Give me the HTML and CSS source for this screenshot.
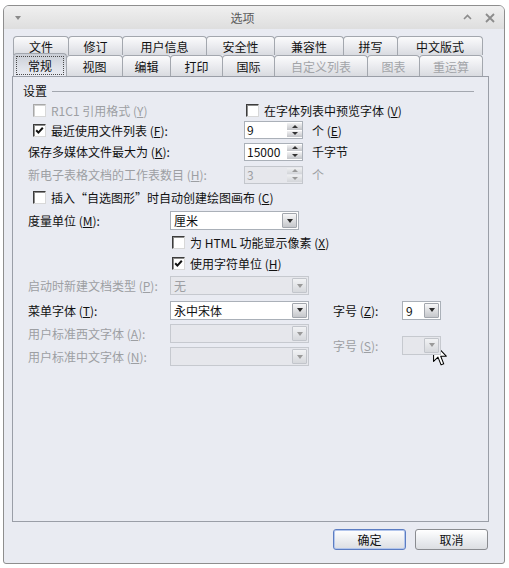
FILE: index.html
```html
<!DOCTYPE html>
<html lang="zh-CN">
<head>
<meta charset="utf-8">
<title>选项</title>
<link rel="stylesheet" href="styles.css">
</head>
<body>
<div class="win">
  <div class="titlebar">
    <span class="tb-menu"><span class="tri"></span></span>
    <span class="title">选项</span>
    <span class="tb-ctrl">
      <svg class="tb-up" width="9" height="6" viewBox="0 0 9 6"><polyline points="1,5 4.5,1.5 8,5" fill="none" stroke="#8c8c8c" stroke-width="1.6"/></svg>
      <svg class="tb-x" width="10" height="10" viewBox="0 0 10 10"><path d="M1,1 L9,9 M9,1 L1,9" stroke="#8c8c8c" stroke-width="1.8"/></svg>
    </span>
  </div>
  <div class="body">
    <div class="tabs">
      <div class="tabrow back">
        <div class="tab w56">文件</div>
        <div class="tab w55">修订</div>
        <div class="tab w85">用户信息</div>
        <div class="tab w69">安全性</div>
        <div class="tab w70">兼容性</div>
        <div class="tab w55">拼写</div>
        <div class="tab w86">中文版式</div>
      </div>
      <div class="tabrow front">
        <div class="tab sel w54"><span class="focus">常规</span></div>
        <div class="tab w57">视图</div>
        <div class="tab w49">编辑</div>
        <div class="tab w53">打印</div>
        <div class="tab w53">国际</div>
        <div class="tab dis w94">自定义列表</div>
        <div class="tab dis w53">图表</div>
        <div class="tab dis w64">重运算</div>
      </div>
    </div>
    <div class="panel">
      <div class="ghead"><span class="gtitle">设置</span><span class="gline"></span></div>
      <div class="rows">
        <div class="row h19">
          <div class="half"><span class="chk dis ind"><span class="box"></span><span>R1C1 引用格式 (<u>Y</u>)</span></span></div>
          <span class="chk"><span class="box"></span><span>在字体列表中预览字体 (<u>V</u>)</span></span>
        </div>
        <div class="row h20">
          <div class="lab216"><span class="chk ind"><span class="box"><svg width="9" height="9" viewBox="0 0 9 9"><polyline points="1.2,4.2 3.4,6.6 7.8,1.8" fill="none" stroke="#111" stroke-width="2"/></svg></span><span>最近使用文件列表 (<u>F</u>):</span></span></div>
          <div class="spin"><span class="val">9</span><span class="btns"><span class="up"></span><span class="dn"></span></span></div>
          <span class="unit">个 (<u>E</u>)</span>
        </div>
        <div class="row h23">
          <div class="lab216">保存多媒体文件最大为 (<u>K</u>):</div>
          <div class="spin"><span class="val">15000</span><span class="btns"><span class="up"></span><span class="dn"></span></span></div>
          <span class="unit">千字节</span>
        </div>
        <div class="row h23 dis">
          <div class="lab216">新电子表格文档的工作表数目 (<u>H</u>):</div>
          <div class="spin off"><span class="val">3</span><span class="btns"><span class="up"></span><span class="dn"></span></span></div>
          <span class="unit">个</span>
        </div>
        <div class="row h23">
          <span class="chk ind"><span class="box"></span><span>插入“自选图形”时自动创建绘图画布 (<u>C</u>)</span></span>
        </div>
        <div class="row h23">
          <div class="lab142">度量单位 (<u>M</u>):</div>
          <div class="combo w129"><span class="val">厘米</span><span class="dd"></span></div>
        </div>
        <div class="row h21">
          <span class="chk ind144"><span class="box"></span><span>为 HTML 功能显示像素 (<u>X</u>)</span></span>
        </div>
        <div class="row h20">
          <span class="chk ind144"><span class="box"><svg width="9" height="9" viewBox="0 0 9 9"><polyline points="1.2,4.2 3.4,6.6 7.8,1.8" fill="none" stroke="#111" stroke-width="2"/></svg></span><span>使用字符单位 (<u>H</u>)</span></span>
        </div>
        <div class="row h25 dis">
          <div class="lab142">启动时新建文档类型 (<u>P</u>):</div>
          <div class="combo off w139"><span class="val">无</span><span class="dd"></span></div>
        </div>
        <div class="row h24">
          <div class="lab142">菜单字体 (<u>T</u>):</div>
          <div class="combo w139"><span class="val">永中宋体</span><span class="dd"></span></div>
          <div class="lab69 gap24">字号 (<u>Z</u>):</div>
          <div class="combo w39"><span class="val">9</span><span class="dd"></span></div>
        </div>
        <div class="pair">
          <div class="pair-left">
            <div class="row h23 dis">
              <div class="lab142">用户标准西文字体 (<u>A</u>):</div>
              <div class="combo off w139"><span class="val"></span><span class="dd"></span></div>
            </div>
            <div class="row h23 dis">
              <div class="lab142">用户标准中文字体 (<u>N</u>):</div>
              <div class="combo off w139"><span class="val"></span><span class="dd"></span></div>
            </div>
          </div>
          <div class="pair-right dis">
            <div class="lab69 gap24">字号 (<u>S</u>):</div>
            <div class="combo off w39"><span class="val"></span><span class="dd"></span></div>
          </div>
        </div>
      </div>
    </div>
    <div class="buttons">
      <button class="btn default">确定</button>
      <button class="btn">取消</button>
    </div>
  </div>
</div>
<svg class="cursor" width="15" height="25" viewBox="0 0 13 21"><path d="M0.5,0.5 L0.5,16.5 L4.3,12.8 L7,19.5 L9.3,18.6 L6.7,12 L11.5,12 Z" fill="#fff" stroke="#000" stroke-width="0.9" stroke-linejoin="round"/></svg>
</body>
</html>
```

FILE: styles.css
```css
html, body {
  margin: 0;
  padding: 0;
  background: #ffffff;
}
body {
  font-family: "Noto Sans CJK SC", "Liberation Sans", sans-serif;
  font-size: 12px;
  color: #111;
  position: relative;
}
u { text-decoration: underline; text-underline-offset: 1px; }

.win {
  margin: 5px 0 0 3px;
  width: 502px;
  height: 559px;
  box-sizing: border-box;
  border: 1px solid #8e8e8e;
  border-radius: 6px 6px 3px 3px;
  background: #e9ebf2;
  overflow: hidden;
  display: flex;
  flex-direction: column;
}

.titlebar {
  height: 23px;
  flex: none;
  display: flex;
  align-items: center;
  background: linear-gradient(#f0f0f0, #dedede);
}
.tb-menu {
  width: 18px;
  padding-left: 11px;
  box-sizing: border-box;
  display: flex;
  align-items: center;
}
.tri {
  width: 0; height: 0;
  border-left: 3.5px solid transparent;
  border-right: 3.5px solid transparent;
  border-top: 4px solid #8a8a8a;
}
.title {
  flex: 1;
  text-align: center;
  color: #5a5a5a;
  font-size: 12px;
}
.tb-ctrl {
  display: flex;
  align-items: center;
  gap: 13px;
  padding-right: 9px;
}
.tb-up { margin-top: -1px; }

.body {
  flex: 1;
  display: flex;
  flex-direction: column;
  padding: 7px 0 0 8px;
}

.tabs { margin-left: 1px; }
.tabrow { display: flex; }
.tabrow.back { height: 19px; }
.tabrow.front { height: 21px; position: relative; z-index: 2; }
.tab {
  box-sizing: border-box;
  border: 1px solid #a3a7ae;
  border-bottom: none;
  border-radius: 4px 4px 0 0;
  background: linear-gradient(#fbfbfc, #e9eaee 55%, #d9dbe0);
  display: flex;
  align-items: center;
  justify-content: center;
  color: #111;
  font-size: 12px;
  margin-left: -1px;
}
.tab:first-child { margin-left: 0; }
.tab.dis { color: #a2a4a8; }
.tabrow.back .tab { height: 19px; }
.tabrow.front .tab { height: 21px; }
.tab.sel {
  height: 23px !important;
  margin-top: -2px;
  background: linear-gradient(#c9cdd5, #dfe2e9 60%, #e9ebf2);
  padding: 2px 2px 1px 2px;
  position: relative;
}
.focus {
  flex: 1;
  align-self: stretch;
  border: 1px dotted #4a4a4a;
  display: flex;
  align-items: center;
  justify-content: center;
}

.w39 { width: 39px; }
.w49 { width: 49px; }
.w53 { width: 53px; }
.w54 { width: 54px; }
.w55 { width: 55px; }
.w56 { width: 56px; }
.w57 { width: 57px; }
.w64 { width: 64px; }
.w69 { width: 69px; }
.w70 { width: 70px; }
.w85 { width: 85px; }
.w86 { width: 86px; }
.w94 { width: 94px; }
.w129 { width: 129px; }
.w139 { width: 139px; }

.panel {
  width: 477px;
  height: 446px;
  box-sizing: border-box;
  border: 1px solid #9a9ea7;
  padding: 6px 14px 0 10px;
  position: relative;
  z-index: 1;
}

.ghead {
  height: 14px;
  display: flex;
  align-items: center;
  margin-bottom: 4px;
}
.gtitle { color: #111; }
.gline {
  flex: 1;
  height: 0;
  border-top: 1px solid #a3a7af;
  margin-left: 5px;
  margin-top: 2px;
}

.rows { padding-left: 5px; }
.row {
  display: flex;
  align-items: center;
  white-space: nowrap;
}
.h19 { height: 19px; }
.h20 { height: 20px; }
.h21 { height: 21px; }
.h23 { height: 23px; }
.h24 { height: 24px; }
.h25 { height: 25px; }
.dis { color: #9d9fa3; }

.half { width: 218px; }
.lab216 { width: 216px; }
.lab142 { width: 142px; }
.lab69 { width: 69px; }
.gap24 { margin-left: 24px; }

.chk {
  display: flex;
  align-items: center;
  gap: 5px;
}
.chk.ind { margin-left: 5px; }
.chk.ind144 { margin-left: 144px; }
.box {
  width: 13px;
  height: 13px;
  box-sizing: border-box;
  background: #fff;
  border-top: 1px solid #3c3c3c;
  border-left: 1px solid #3c3c3c;
  border-right: 1px solid #d8d8d8;
  border-bottom: 1px solid #d8d8d8;
  box-shadow: inset 1px 1px 0 #8c8c8c;
  display: flex;
  align-items: center;
  justify-content: center;
}
.chk.dis .box {
  border-top-color: #a8a8a8;
  border-left-color: #a8a8a8;
  box-shadow: inset 1px 1px 0 #cfcfcf;
}

.spin {
  display: flex;
  width: 59px;
  height: 18px;
  box-sizing: border-box;
  border: 1px solid #aab0b8;
  background: #fff;
}
.spin .val {
  flex: 1;
  padding-left: 2px;
  line-height: 16px;
  color: #111;
}
.spin .btns {
  width: 15px;
  display: flex;
  flex-direction: column;
  gap: 1px;
  padding: 1px 0;
  background: #fff;
}
.spin .up, .spin .dn {
  flex: 1;
  background: linear-gradient(#f2f2f3, #c3c5c9);
  display: flex;
  align-items: center;
  justify-content: center;
}
.spin .up::after {
  content: "";
  border-left: 3.5px solid transparent;
  border-right: 3.5px solid transparent;
  border-bottom: 3px solid #333;
}
.spin .dn::after {
  content: "";
  border-left: 3.5px solid transparent;
  border-right: 3.5px solid transparent;
  border-top: 3px solid #333;
}
.spin.off { background: #e6e7ec; border-color: #c3c6cc; }
.spin.off .val { color: #9d9fa3; }
.spin.off .btns { background: #e6e7ec; }
.spin.off .up, .spin.off .dn { background: linear-gradient(#eeeff1, #d3d5d9); }
.spin.off .up::after { border-bottom-color: #999; }
.spin.off .dn::after { border-top-color: #999; }

.unit { margin-left: 9px; }

.combo {
  display: flex;
  align-items: center;
  height: 19px;
  box-sizing: border-box;
  border: 1px solid #aab0b8;
  background: #fff;
  padding: 0 1px 0 3px;
  color: #111;
}
.combo .val { flex: 1; }
.combo .dd {
  width: 15px;
  height: 15px;
  box-sizing: border-box;
  border: 1px solid #a2a6ad;
  border-radius: 1px;
  background: linear-gradient(#f7f7f8, #c5c7cb);
  display: flex;
  align-items: center;
  justify-content: center;
}
.combo .dd::after {
  content: "";
  border-left: 3.5px solid transparent;
  border-right: 3.5px solid transparent;
  border-top: 4px solid #2c2c2c;
}
.combo.off { background: #e6e7ec; border-color: #c6c9cf; color: #9d9fa3; }
.combo.off .dd { border-color: #c2c5cb; background: linear-gradient(#f1f2f4, #d6d8dc); }
.combo.off .dd::after { border-top-color: #9a9a9a; }

.pair { display: flex; align-items: center; }
.pair-right { display: flex; align-items: center; }

.buttons {
  width: 477px;
  display: flex;
  justify-content: flex-end;
  gap: 9px;
  margin-top: 7px;
}
.btn {
  width: 73px;
  height: 21px;
  box-sizing: border-box;
  border: 1px solid #8a8c90;
  border-radius: 3px;
  background: linear-gradient(#ffffff, #eceef1 50%, #dcdee2);
  font-family: "Noto Sans CJK SC", "Liberation Sans", sans-serif;
  font-size: 12px;
  color: #111;
  padding: 0;
  margin: 0;
  margin-right: 1px;
}
.btn.default {
  border-color: #5c7dc2;
  box-shadow: inset 0 0 0 1px #b3c6ec;
  margin-right: 0;
}

.cursor {
  position: absolute;
  left: 433px;
  top: 342px;
}
```
